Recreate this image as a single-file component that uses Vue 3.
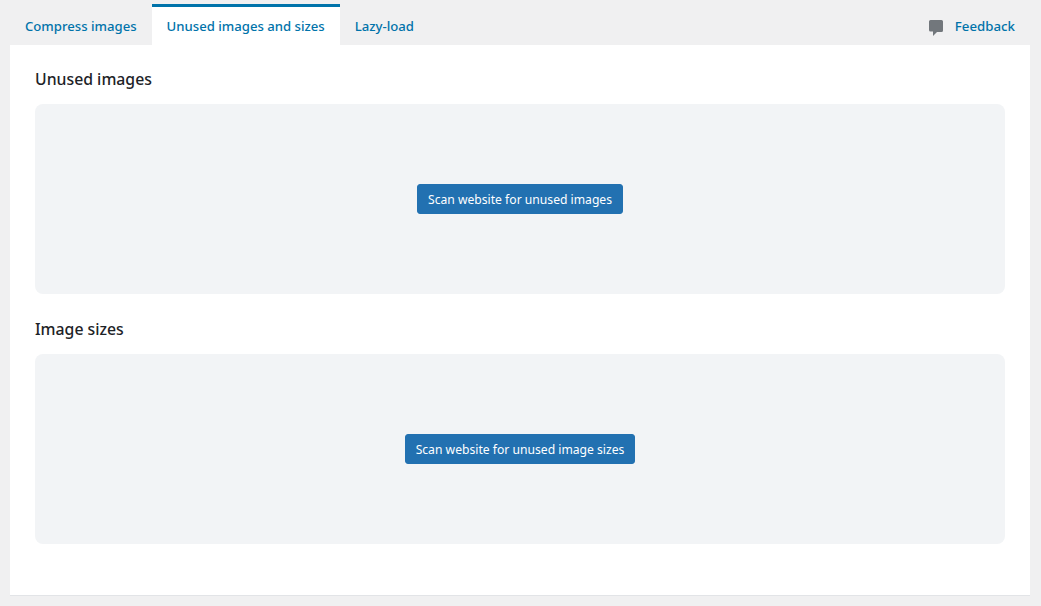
<script setup>
const tabs = [
  { label: 'Compress images', active: false },
  { label: 'Unused images and sizes', active: true },
  { label: 'Lazy-load', active: false },
]
const sections = [
  { title: 'Unused images', action: 'Scan website for unused images' },
  { title: 'Image sizes', action: 'Scan website for unused image sizes' },
]
</script>

<template>
  <div class="page">
    <nav class="tabs">
      <a v-for="tab in tabs" :key="tab.label" class="tab" :class="{ active: tab.active }">{{ tab.label }}</a>
      <a class="feedback">
        <svg class="feedback-icon" width="14" height="16" viewBox="0 0 14 16" aria-hidden="true">
          <path d="M1.500 0h11A1.500 1.500 0 0 1 14 1.500v9a1.500 1.500 0 0 1-1.500 1.500H8L4 16V11.500H1.500A1.500 1.500 0 0 1 0 10v-8.500A1.500 1.500 0 0 1 1.500 0z" fill="#72777c" />
        </svg>
        <span>Feedback</span>
      </a>
    </nav>
    <main class="panel">
      <section v-for="section in sections" :key="section.title" class="section">
        <h2 class="title">{{ section.title }}</h2>
        <div class="box">
          <button class="scan" type="button">{{ section.action }}</button>
        </div>
      </section>
    </main>
  </div>
</template>

<style>
html, body {
  margin: 0;
  background: #f0f0f1;
}
</style>

<style scoped>
.page {
  width: 1041px;
  height: 606px;
  box-sizing: border-box;
  padding: 0 11px 10px 10px;
  background: #f0f0f1;
  font-family: "Noto Sans", "Open Sans", sans-serif;
  display: flex;
  flex-direction: column;
}
.tabs {
  height: 45px;
  display: flex;
  align-items: stretch;
  flex: none;
}
.tab {
  box-sizing: border-box;
  padding: 3px 15px 0;
  margin-top: 4px;
  height: 41px;
  display: flex;
  align-items: center;
  font-size: 13.15px;
  font-weight: 500;
  color: #0073aa;
}
.tab.active {
  background: #fff;
  border-top: 3px solid #0073aa;
  padding-top: 0;
}
.feedback {
  margin-left: auto;
  display: flex;
  align-items: center;
  gap: 12px;
  padding: 7px 15px 0 0;
  font-size: 13.25px;
  font-weight: 500;
  color: #0073aa;
}
.feedback-icon {
  margin-top: 4px;
}
.panel {
  flex: 1;
  background: #fff;
  border-bottom: 1px solid #e2e4e7;
  padding: 0 25px;
  display: flex;
  flex-direction: column;
}
.section {
  display: flex;
  flex-direction: column;
}
.title {
  margin: 0;
  height: 59px;
  box-sizing: border-box;
  padding-top: 22px;
  font-size: 15.8px;
  line-height: 24px;
  font-weight: 500;
  color: #1d2327;
}
.section + .section .title {
  height: 60px;
  padding-top: 23px;
}
.box {
  height: 190px;
  background: #f2f4f6;
  border-radius: 8px;
  display: flex;
  align-items: center;
  justify-content: center;
}
.scan {
  height: 30px;
  padding: 2px 10px 0;
  border: 1px solid #2271b1;
  border-radius: 3px;
  background: #2271b1;
  color: #fff;
  font-family: inherit;
  font-size: 12.15px;
  line-height: 26px;
  white-space: nowrap;
}
</style>
